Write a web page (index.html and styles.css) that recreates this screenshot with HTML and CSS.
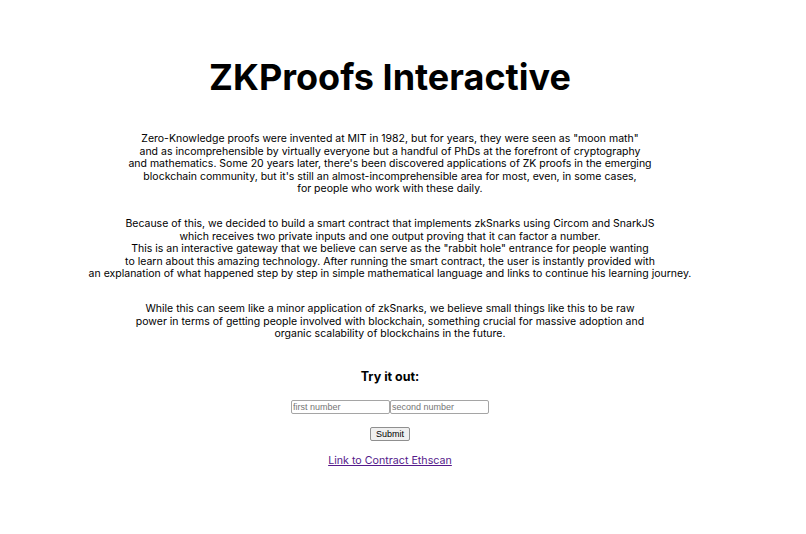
FILE: index.html
```html
<!doctype html>
<html lang="en">
    <head>
        <meta charset="UTF-8" />
        <title>ZKProofs Interactive</title>
        <link rel="stylesheet" href="styles.css">
    </head>
    <body>
        <div class="page">
            <h1>ZKProofs Interactive</h1>

            <p>
                Zero-Knowledge proofs were invented at MIT in 1982, but for years, they were seen as "moon math"<br />
                and as incomprehensible by virtually everyone but a handful of PhDs at the forefront of cryptography<br />
                and mathematics. Some 20 years later, there's been discovered applications of ZK proofs in the emerging<br />
                blockchain community, but it's still an almost-incomprehensible area for most, even, in some cases,<br />
                for people who work with these daily.
            </p>

            <p>
                Because of this, we decided to build a smart contract that implements zkSnarks using Circom and SnarkJS<br />
                which receives two private inputs and one output proving that it can factor a number.<br />
                This is an interactive gateway that we believe can serve as the "rabbit hole" entrance for people wanting<br />
                to learn about this amazing technology. After running the smart contract, the user is instantly provided with<br />
                an explanation of what happened step by step in simple mathematical language and links to continue his learning journey.
            </p>

            <p>
                While this can seem like a minor application of zkSnarks, we believe small things like this to be raw<br />
                power in terms of getting people involved with blockchain, something crucial for massive adoption and<br />
                organic scalability of blockchains in the future.
            </p>

            <h3>Try it out:</h3>

            <form class="try-form" onsubmit="return false;">
                <div class="inputs">
                    <input type="text" placeholder="first number" />
                    <input type="text" placeholder="second number" />
                </div>
                <button type="submit">Submit</button>
            </form>

            <a href="#" class="ethscan">Link to Contract Ethscan</a>
        </div>
    </body>
</html>
```

FILE: styles.css
```css
* {
    box-sizing: border-box;
}
body {
    margin: 0;
    font-family: Inter, "Liberation Sans", Arial, sans-serif;
    color: #000;
    background: #fff;
}
.page {
    display: flex;
    flex-direction: column;
    align-items: center;
    text-align: center;
    padding: 50px 26px 40px 0;
}
h1 {
    font-size: 36px;
    font-weight: 700;
    margin: 0 0 29px;
    line-height: 54px;
}
p {
    font-size: 10.5px;
    line-height: 12.6px;
    margin: 0 0 22px;
}
h3 {
    font-size: 12.5px;
    line-height: 17px;
    font-weight: 700;
    margin: 5px 0 15px;
}
.try-form {
    display: flex;
    flex-direction: column;
    align-items: center;
    gap: 13px;
}
.inputs {
    display: flex;
}
input {
    width: 99px;
    height: 14px;
    padding: 0 1px;
    font-family: "Liberation Sans", Arial, sans-serif;
    font-size: 9px;
    border: 1px solid #a5a5a5;
    border-radius: 2px;
}
button {
    font-family: "Liberation Sans", Arial, sans-serif;
    font-size: 9px;
    padding: 0 5px;
    height: 14px;
    line-height: 12px;
    border: 1px solid #8f8f8f;
    border-radius: 2px;
    background: #efefef;
}
.ethscan {
    margin-top: 13px;
    font-size: 10.7px;
    line-height: 13px;
    color: #551a8b;
}
```
